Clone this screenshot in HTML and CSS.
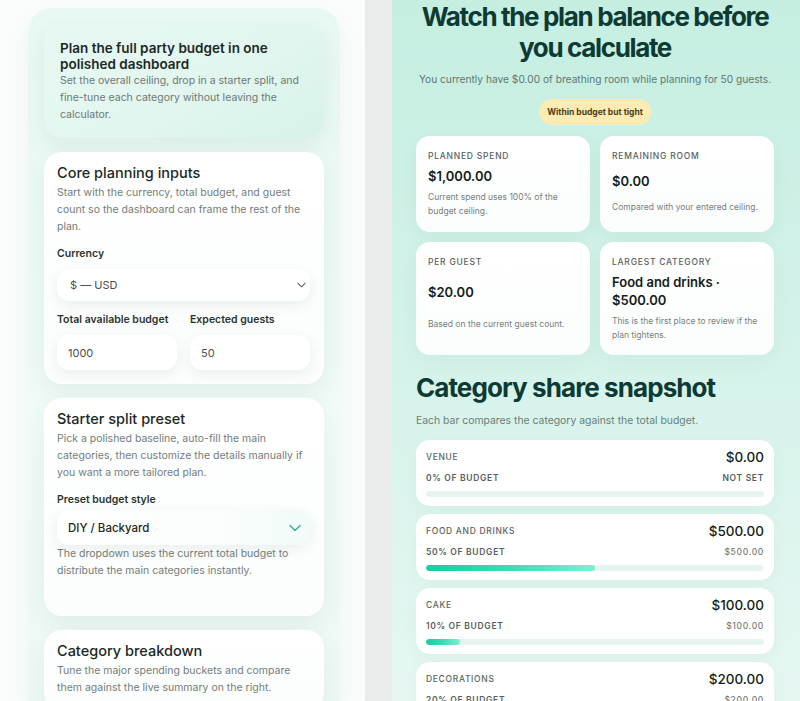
FILE: index.html
```html
<!DOCTYPE html>
<html lang="en">
<head>
  <meta charset="UTF-8">
  <title>Party Budget Planner</title>
  <link rel="stylesheet" href="styles.css">
</head>
<body>
  <div class="page">
    <aside class="sidebar">
      <div class="sidebar-panel">
        <section class="hero-card">
          <h1>Plan the full party budget in one polished dashboard</h1>
          <p>Set the overall ceiling, drop in a starter split, and fine-tune each category without leaving the calculator.</p>
        </section>

        <section class="card">
          <h2>Core planning inputs</h2>
          <p class="card-text">Start with the currency, total budget, and guest count so the dashboard can frame the rest of the plan.</p>

          <label class="field-label" for="currency">Currency</label>
          <div class="select-wrap">
            <select id="currency" class="field">
              <option>$ — USD</option>
              <option>€ — EUR</option>
              <option>£ — GBP</option>
            </select>
            <svg class="chevron" viewBox="0 0 10 6" width="9" height="6"><path d="M1 1l4 4 4-4" fill="none" stroke="#5d6663" stroke-width="1.2" stroke-linecap="round" stroke-linejoin="round"/></svg>
          </div>

          <div class="field-row">
            <div>
              <label class="field-label" for="budget">Total available budget</label>
              <input id="budget" class="field" type="number" value="1000">
            </div>
            <div>
              <label class="field-label" for="guests">Expected guests</label>
              <input id="guests" class="field" type="number" value="50">
            </div>
          </div>
        </section>

        <section class="card preset-card">
          <h2>Starter split preset</h2>
          <p class="card-text">Pick a polished baseline, auto-fill the main categories, then customize the details manually if you want a more tailored plan.</p>

          <label class="field-label tight" for="preset">Preset budget style</label>
          <div class="select-wrap">
            <select id="preset" class="field preset-select">
              <option>DIY / Backyard</option>
              <option>Classic</option>
              <option>Premium</option>
            </select>
            <svg class="chevron chevron-green" viewBox="0 0 12 8" width="12" height="8"><path d="M1 1.5l5 5 5-5" fill="none" stroke="#35b38a" stroke-width="1.4" stroke-linecap="round" stroke-linejoin="round"/></svg>
          </div>
          <p class="card-text hint">The dropdown uses the current total budget to distribute the main categories instantly.</p>
        </section>

        <section class="card">
          <h2>Category breakdown</h2>
          <p class="card-text">Tune the major spending buckets and compare them against the live summary on the right.</p>
        </section>
      </div>
    </aside>

    <main class="summary">
      <h2 class="summary-title">Watch the plan balance before you calculate</h2>
      <p class="summary-sub">You currently have $0.00 of breathing room while planning for 50 guests.</p>
      <div class="badge-row"><span class="badge">Within budget but tight</span></div>

      <div class="stats">
        <div class="stat">
          <span class="stat-label">Planned spend</span>
          <strong class="stat-value">$1,000.00</strong>
          <p class="stat-desc">Current spend uses 100% of the budget ceiling.</p>
        </div>
        <div class="stat">
          <span class="stat-label">Remaining room</span>
          <strong class="stat-value">$0.00</strong>
          <p class="stat-desc">Compared with your entered ceiling.</p>
        </div>
        <div class="stat">
          <span class="stat-label">Per guest</span>
          <strong class="stat-value">$20.00</strong>
          <p class="stat-desc">Based on the current guest count.</p>
        </div>
        <div class="stat">
          <span class="stat-label">Largest category</span>
          <strong class="stat-value">Food and drinks · $500.00</strong>
          <p class="stat-desc">This is the first place to review if the plan tightens.</p>
        </div>
      </div>

      <h2 class="share-title">Category share snapshot</h2>
      <p class="share-sub">Each bar compares the category against the total budget.</p>

      <div class="share-list">
        <div class="share">
          <div class="share-head"><span class="share-name">Venue</span><span class="share-amount">$0.00</span></div>
          <div class="share-meta"><span>0% of budget</span><span>Not set</span></div>
          <div class="bar"><div class="bar-fill" style="width: 0%"></div></div>
        </div>
        <div class="share">
          <div class="share-head"><span class="share-name">Food and drinks</span><span class="share-amount">$500.00</span></div>
          <div class="share-meta"><span>50% of budget</span><span class="meta-value">$500.00</span></div>
          <div class="bar"><div class="bar-fill" style="width: 50%"></div></div>
        </div>
        <div class="share">
          <div class="share-head"><span class="share-name">Cake</span><span class="share-amount">$100.00</span></div>
          <div class="share-meta"><span>10% of budget</span><span class="meta-value">$100.00</span></div>
          <div class="bar"><div class="bar-fill" style="width: 10%"></div></div>
        </div>
        <div class="share">
          <div class="share-head"><span class="share-name">Decorations</span><span class="share-amount">$200.00</span></div>
          <div class="share-meta"><span>20% of budget</span><span class="meta-value">$200.00</span></div>
          <div class="bar"><div class="bar-fill" style="width: 20%"></div></div>
        </div>
      </div>
    </main>
  </div>
</body>
</html>
```

FILE: styles.css
```css
* {
  box-sizing: border-box;
}

body {
  margin: 0;
  font-family: Inter, "Noto Sans", sans-serif;
  background: #ebeded;
  color: #1e2926;
  height: 701px;
  overflow: hidden;
}

h1, h2, p {
  margin: 0;
}

.page {
  display: grid;
  grid-template-columns: 365px 1fr;
  gap: 27px;
  height: 701px;
}

/* left column */

.sidebar {
  background: #fbfdfc;
  padding: 8px 25px 0 28px;
  overflow: hidden;
}

.sidebar-panel {
  height: 100%;
  border-radius: 24px 24px 0 0;
  background: linear-gradient(180deg, #e8f8f2 0%, #f1fbf8 60%, #eef9f6 100%);
  box-shadow: 0 10px 30px rgba(40, 110, 90, 0.06);
  padding: 16px;
  display: flex;
  flex-direction: column;
  gap: 14px;
}

.hero-card {
  border-radius: 18px;
  padding: 16px 16px 15px;
  background: linear-gradient(150deg, #e7f8f2 0%, #e2f6ef 55%, #d6f3e9 100%);
  box-shadow: 0 10px 24px rgba(30, 90, 70, 0.08);
}

.hero-card h1 {
  font-size: 13.5px;
  line-height: 16px;
  font-weight: 600;
  color: #1b2824;
}

.hero-card p {
  font-size: 10.5px;
  line-height: 17px;
  color: #6e7875;
}

.card {
  background: linear-gradient(180deg, #ffffff 0%, #fbfefd 100%);
  border-radius: 18px;
  padding: 12px 14px 14px 13px;
  box-shadow: 0 10px 26px rgba(30, 90, 70, 0.07);
}

.card h2 {
  font-size: 14.5px;
  line-height: 17px;
  font-weight: 500;
  color: #1b2824;
}

.card-text {
  margin-top: 3px;
  font-size: 10.5px;
  line-height: 17px;
  color: #737d7a;
}

.field-label {
  display: block;
  margin: 12px 0 8px;
  font-size: 10.5px;
  line-height: 14px;
  font-weight: 600;
  color: #2b3330;
}

.field-label.tight {
  margin-bottom: 3px;
}

.select-wrap {
  position: relative;
}

.field {
  display: block;
  width: 100%;
  height: 32px;
  padding: 0 13px;
  border: none;
  border-radius: 12px;
  background: #fff;
  font-family: inherit;
  font-size: 11px;
  color: #4a504e;
  box-shadow: 0 4px 14px rgba(30, 70, 60, 0.09);
  appearance: none;
  -moz-appearance: textfield;
}

.field::-webkit-inner-spin-button,
.field::-webkit-outer-spin-button {
  -webkit-appearance: none;
}

.chevron {
  position: absolute;
  right: 4px;
  top: 13px;
}

.field-row {
  display: grid;
  grid-template-columns: 1fr 1fr;
  gap: 13px;
}

.field-row .field-label {
  margin-top: 12px;
}

.field-row .field {
  height: 35px;
  padding: 0 11px;
}

.preset-select {
  height: 35px;
  padding: 0 11px;
  font-weight: 500;
  font-size: 11.5px;
  color: #1d2623;
  background: linear-gradient(90deg, #ffffff 0%, #fbfefd 60%, #f1fbf7 100%);
}

.chevron-green {
  right: 9px;
  top: 14px;
}

.hint {
  margin-top: 0;
}

.preset-card {
  padding-bottom: 37px;
}

/* right column */

.summary {
  background: linear-gradient(180deg, #c5eee1 0%, #d3f2e9 45%, #e6f7f2 100%);
  padding: 1px 26px 0 24px;
  overflow: hidden;
}

.summary-title {
  text-align: center;
  font-size: 26px;
  line-height: 31px;
  font-weight: 700;
  letter-spacing: -0.052em;
  color: #0d3a33;
}

.summary-sub {
  margin-top: 7px;
  text-align: center;
  white-space: nowrap;
  font-size: 10.2px;
  line-height: 18px;
  color: #5f7871;
}

.badge-row {
  margin-top: 11px;
  display: flex;
  justify-content: center;
}

.badge {
  height: 26px;
  padding: 0 8px;
  display: inline-flex;
  align-items: center;
  border-radius: 13px;
  background: #fcecb3;
  font-size: 8.5px;
  font-weight: 700;
  color: #4b3d17;
}

.stats {
  margin-top: 11px;
  display: grid;
  grid-template-columns: 1fr 1fr;
  gap: 10px;
}

.stat {
  background: linear-gradient(180deg, #ffffff 0%, #fbfefd 100%);
  border-radius: 14px;
  padding: 14px 11px 13px 12px;
  display: flex;
  flex-direction: column;
  gap: 5px;
  box-shadow: 0 6px 18px rgba(30, 100, 80, 0.05);
}

.stat-label {
  font-size: 8.5px;
  line-height: 12px;
  font-weight: 500;
  letter-spacing: 0.09em;
  text-transform: uppercase;
  color: #59625f;
}

.stat-value {
  margin-top: auto;
  font-size: 13px;
  line-height: 18px;
  font-weight: 600;
  color: #141c1a;
}

.stat-desc {
  margin: auto 0;
  font-size: 8.5px;
  line-height: 14.3px;
  color: #767f7c;
}

.share-title {
  margin-top: 17px;
  font-size: 26px;
  line-height: 31px;
  font-weight: 700;
  letter-spacing: -0.035em;
  color: #0d3a33;
}

.share-sub {
  margin-top: 9px;
  font-size: 10.4px;
  line-height: 18px;
  color: #6a7e78;
}

.share-list {
  margin-top: 10px;
  display: flex;
  flex-direction: column;
  gap: 8.5px;
}

.share {
  background: #fff;
  border-radius: 14px;
  padding: 7px 10px 9px;
  box-shadow: 0 6px 18px rgba(30, 100, 80, 0.04);
}

.share-head,
.share-meta {
  display: flex;
  justify-content: space-between;
  align-items: center;
}

.share-head {
  height: 20px;
}

.share-name {
  font-size: 8.5px;
  font-weight: 500;
  letter-spacing: 0.08em;
  text-transform: uppercase;
  color: #5b6360;
}

.share-amount {
  font-size: 13.5px;
  font-weight: 500;
  color: #141c1a;
}

.share-meta {
  margin-top: 5px;
  height: 12px;
  font-size: 8.5px;
  font-weight: 600;
  letter-spacing: 0.08em;
  text-transform: uppercase;
  color: #56605d;
}

.meta-value {
  font-weight: 500;
  color: #737c79;
}

.bar {
  margin-top: 7px;
  height: 5.5px;
  border-radius: 3px;
  background: #e6f4ef;
  overflow: hidden;
}

.bar-fill {
  height: 100%;
  border-radius: 3px;
  background: linear-gradient(90deg, #12cfa1 0%, #3ddcb4 50%, #7cf0d3 100%);
}
```
